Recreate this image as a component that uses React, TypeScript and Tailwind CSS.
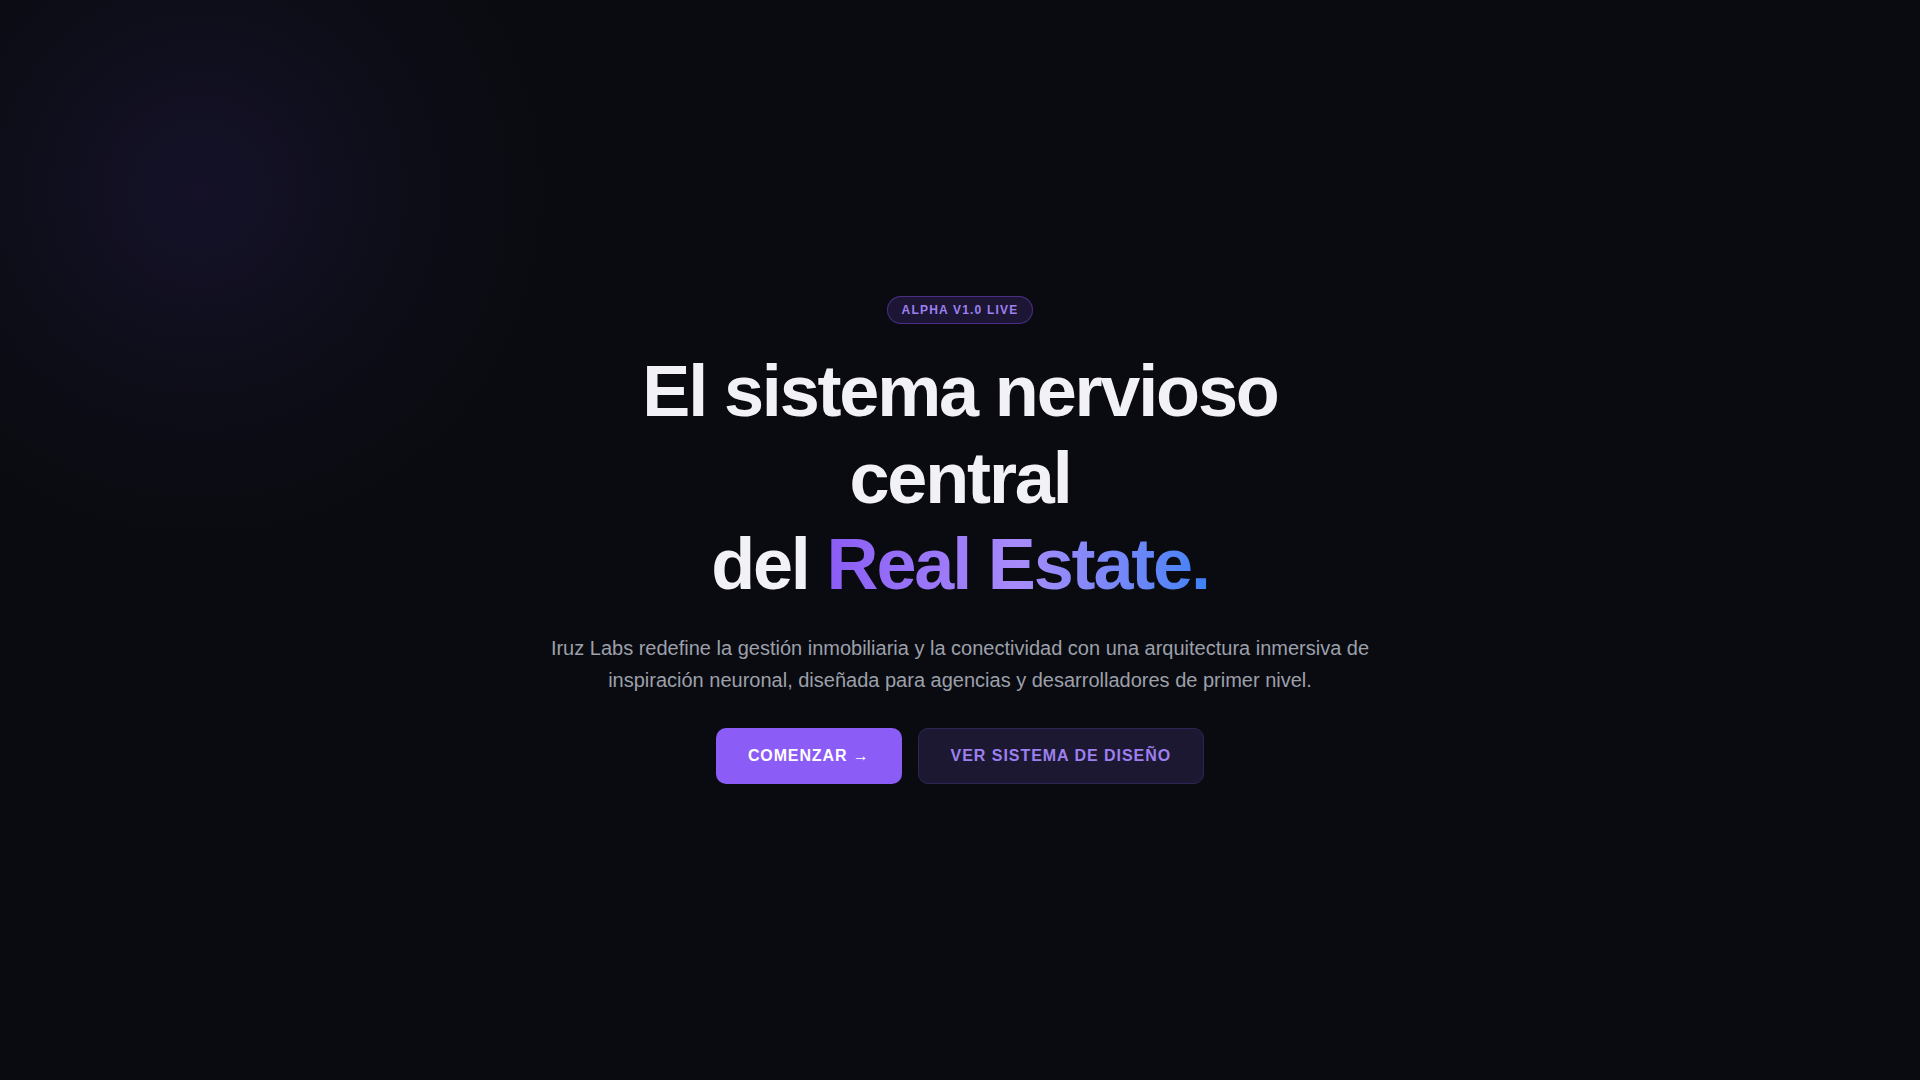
import React from "react";

export default function App() {
  return (
    <main
      className="min-h-screen w-full bg-[#0a0b10] bg-[radial-gradient(circle_at_200px_190px,rgba(90,62,205,0.13),rgba(90,62,205,0.05)_190px,transparent_350px)] flex flex-col items-center justify-center text-center"
      style={{ fontFamily: '"Liberation Sans", Arial, sans-serif' }}
    >
      <div className="rounded-full border border-violet-500/40 bg-violet-500/15 px-3.5 py-[5px] text-xs leading-4 font-bold tracking-widest text-[#9d80f0]">
        ALPHA V1.0 LIVE
      </div>

      <h1 className="mt-6 text-7xl leading-[1.2] font-bold tracking-[-0.03em] text-[#f1f1f6]">
        El sistema nervioso
        <br />
        central
        <br />
        del{" "}
        <span className="bg-gradient-to-r from-[#8b5cf6] via-[#a78bfa] to-[#3b82f6] bg-clip-text text-transparent">
          Real Estate.
        </span>
      </h1>

      <p className="mt-6 max-w-4xl text-xl leading-8 text-[#9ca0ab]">
        Iruz Labs redefine la gestión inmobiliaria y la conectividad con una arquitectura inmersiva de
        inspiración neuronal, diseñada para agencias y desarrolladores de primer nivel.
      </p>

      <div className="mt-8 flex items-center gap-4">
        <button className="h-14 rounded-[10px] bg-[#8b5cf6] px-8 text-base leading-6 font-bold tracking-[0.055em] text-white">
          COMENZAR →
        </button>
        <button className="h-14 rounded-[10px] border border-[#2e2652] bg-[#1c1832] px-8 text-base leading-6 font-bold tracking-[0.06em] text-[#9d80f0]">
          VER SISTEMA DE DISEÑO
        </button>
      </div>
    </main>
  );
}
